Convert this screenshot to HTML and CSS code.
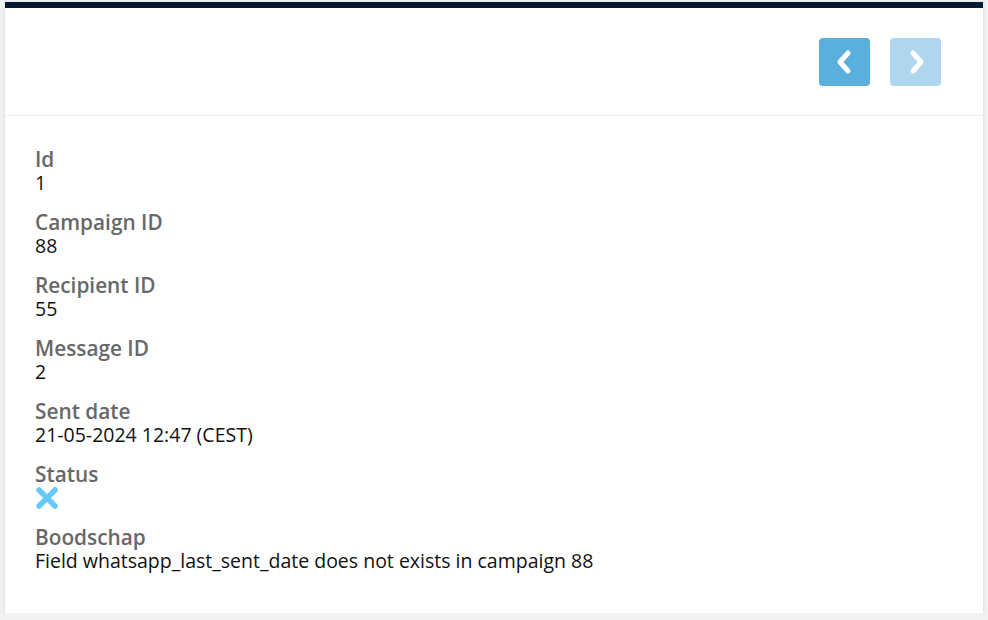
FILE: index.html
```html
<!DOCTYPE html>
<html>
<head>
<meta charset="utf-8">
<link rel="stylesheet" href="styles.css">
</head>
<body>
<div class="card">
  <div class="card-head">
    <button class="nav-btn" aria-label="Previous">
      <svg width="28" height="28" viewBox="0 0 28 28"><path d="M17 5 L9 14 L17 23" fill="none" stroke="#fff" stroke-width="5" stroke-linecap="round" stroke-linejoin="round"/></svg>
    </button>
    <button class="nav-btn disabled" aria-label="Next">
      <svg width="28" height="28" viewBox="0 0 28 28"><path d="M11 5 L19 14 L11 23" fill="none" stroke="#fff" stroke-width="5" stroke-linecap="round" stroke-linejoin="round"/></svg>
    </button>
  </div>
  <div class="card-body">
    <div class="field"><div class="label">Id</div><div class="value">1</div></div>
    <div class="field"><div class="label">Campaign ID</div><div class="value">88</div></div>
    <div class="field"><div class="label">Recipient ID</div><div class="value">55</div></div>
    <div class="field"><div class="label">Message ID</div><div class="value">2</div></div>
    <div class="field"><div class="label">Sent date</div><div class="value">21-05-2024 12:47 (CEST)</div></div>
    <div class="field"><div class="label">Status</div><div class="value icon-value">
      <svg width="24" height="24" viewBox="0 0 24 24"><path d="M4 4 L20 20 M20 4 L4 20" stroke="#66c9f7" stroke-width="5.5" stroke-linecap="round"/></svg>
    </div></div>
    <div class="field"><div class="label">Boodschap</div><div class="value">Field whatsapp_last_sent_date does not exists in campaign 88</div></div>
  </div>
</div>
</body>
</html>
```

FILE: styles.css
```css
html, body {
  margin: 0;
  padding: 0;
  background: #f2f2f2;
  font-family: "Open Sans", "Liberation Sans", sans-serif;
}
body {
  padding: 2px 5px 0 5px;
}
.card {
  background: #fff;
  border-top: 6px solid #001a33;
  box-shadow: 0 1px 4px rgba(0,0,0,0.12);
  height: 611px;
  box-sizing: border-box;
}
.card-head {
  height: 108px;
  box-sizing: border-box;
  border-bottom: 1px solid #eeeeee;
  display: flex;
  justify-content: flex-end;
  align-items: flex-start;
  gap: 20px;
  padding: 30px 42px 0 0;
}
.nav-btn {
  width: 51px;
  height: 48px;
  border: none;
  border-radius: 4px;
  background: #5aafdf;
  display: flex;
  align-items: center;
  justify-content: center;
  padding: 0;
}
.nav-btn.disabled {
  background: #aed7ef;
}
.card-body {
  padding: 31px 31px 0 30px;
  display: flex;
  flex-direction: column;
  gap: 15px;
}
.label {
  font-size: 20.8px;
  font-weight: 600;
  color: #686868;
  line-height: 24px;
}
.value {
  font-size: 19.5px;
  color: #111111;
  line-height: 24px;
}
.icon-value {
  display: flex;
  align-items: center;
  height: 24px;
}
```
